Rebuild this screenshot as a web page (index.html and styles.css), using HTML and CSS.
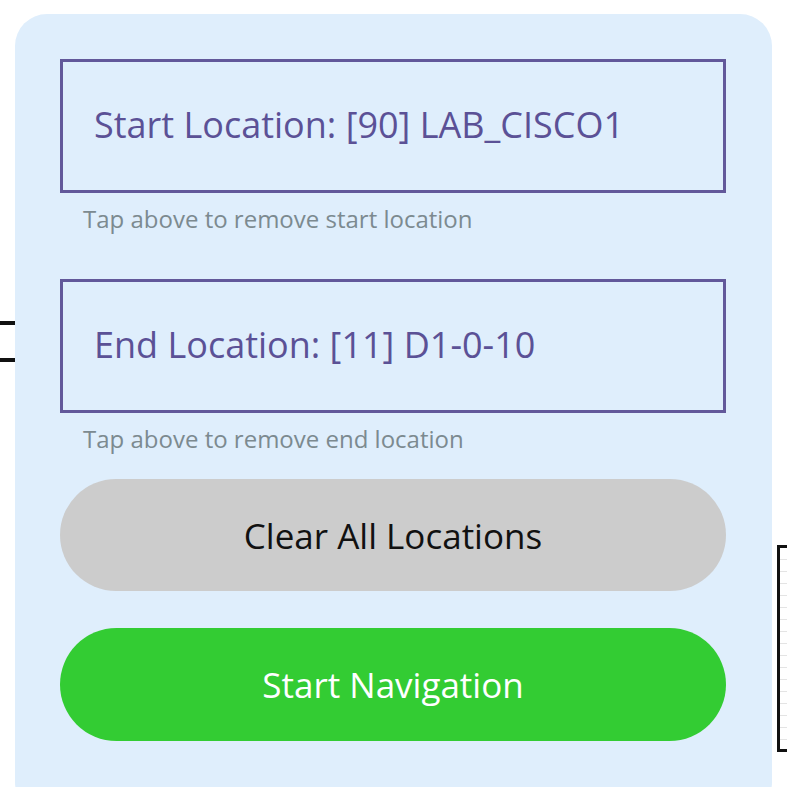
FILE: index.html
```html
<!DOCTYPE html>
<html>
<head>
<meta charset="utf-8">
<link rel="stylesheet" href="styles.css">
</head>
<body>
<div class="map">
  <div class="room room-left"></div>
  <div class="room room-right"></div>
</div>
<div class="panel">
  <div class="field">
    <div class="loc-box">Start Location: [90] LAB_CISCO1</div>
    <div class="hint">Tap above to remove start location</div>
  </div>
  <div class="field">
    <div class="loc-box">End Location: [11] D1-0-10</div>
    <div class="hint">Tap above to remove end location</div>
  </div>
  <button class="btn btn-clear">Clear All Locations</button>
  <button class="btn btn-start">Start Navigation</button>
</div>
</body>
</html>
```
FILE: styles.css
```css
html, body {
  margin: 0;
  padding: 0;
  background: #ffffff;
  width: 787px;
  height: 787px;
  overflow: hidden;
  font-family: "Open Sans", "Noto Sans", sans-serif;
}
body {
  position: relative;
}
.map {
  position: absolute;
  inset: 0;
}
.room {
  position: absolute;
  border: 3px solid #111;
  box-sizing: border-box;
}
.room-left {
  left: -30px;
  top: 321px;
  width: 60px;
  height: 41px;
  border-width: 4px;
}
.room-right {
  left: 777px;
  top: 545px;
  width: 40px;
  height: 207px;
  background: repeating-linear-gradient(180deg, #fff 0 11px, #e4e4e4 11px 12px);
}
.panel {
  position: relative;
  margin: 14px 0 0 15px;
  width: 757px;
  height: 800px;
  box-sizing: border-box;
  background: #dfeefc;
  border-radius: 32px;
  padding: 45px 46px 0 45px;
  display: flex;
  flex-direction: column;
}
.field {
  display: flex;
  flex-direction: column;
}
.field + .field {
  margin-top: 46px;
}
.loc-box {
  height: 134px;
  box-sizing: border-box;
  border: 3px solid #62589a;
  display: flex;
  align-items: center;
  padding-left: 31px;
  padding-bottom: 3px;
  font-size: 36px;
  color: #5b5196;
}
.hint {
  margin-top: 12px;
  padding-left: 23px;
  font-size: 24px;
  line-height: 28px;
  color: #7c8a90;
}
.btn {
  border: none;
  border-radius: 57px;
  font-family: inherit;
  font-size: 35px;
  height: 112px;
  width: 100%;
  padding: 0;
}
.btn-clear {
  margin-top: 26px;
  background: #cccccc;
  color: #111111;
}
.btn-start {
  margin-top: 37px;
  height: 113px;
  background: #33cc33;
  color: #ffffff;
}
```
